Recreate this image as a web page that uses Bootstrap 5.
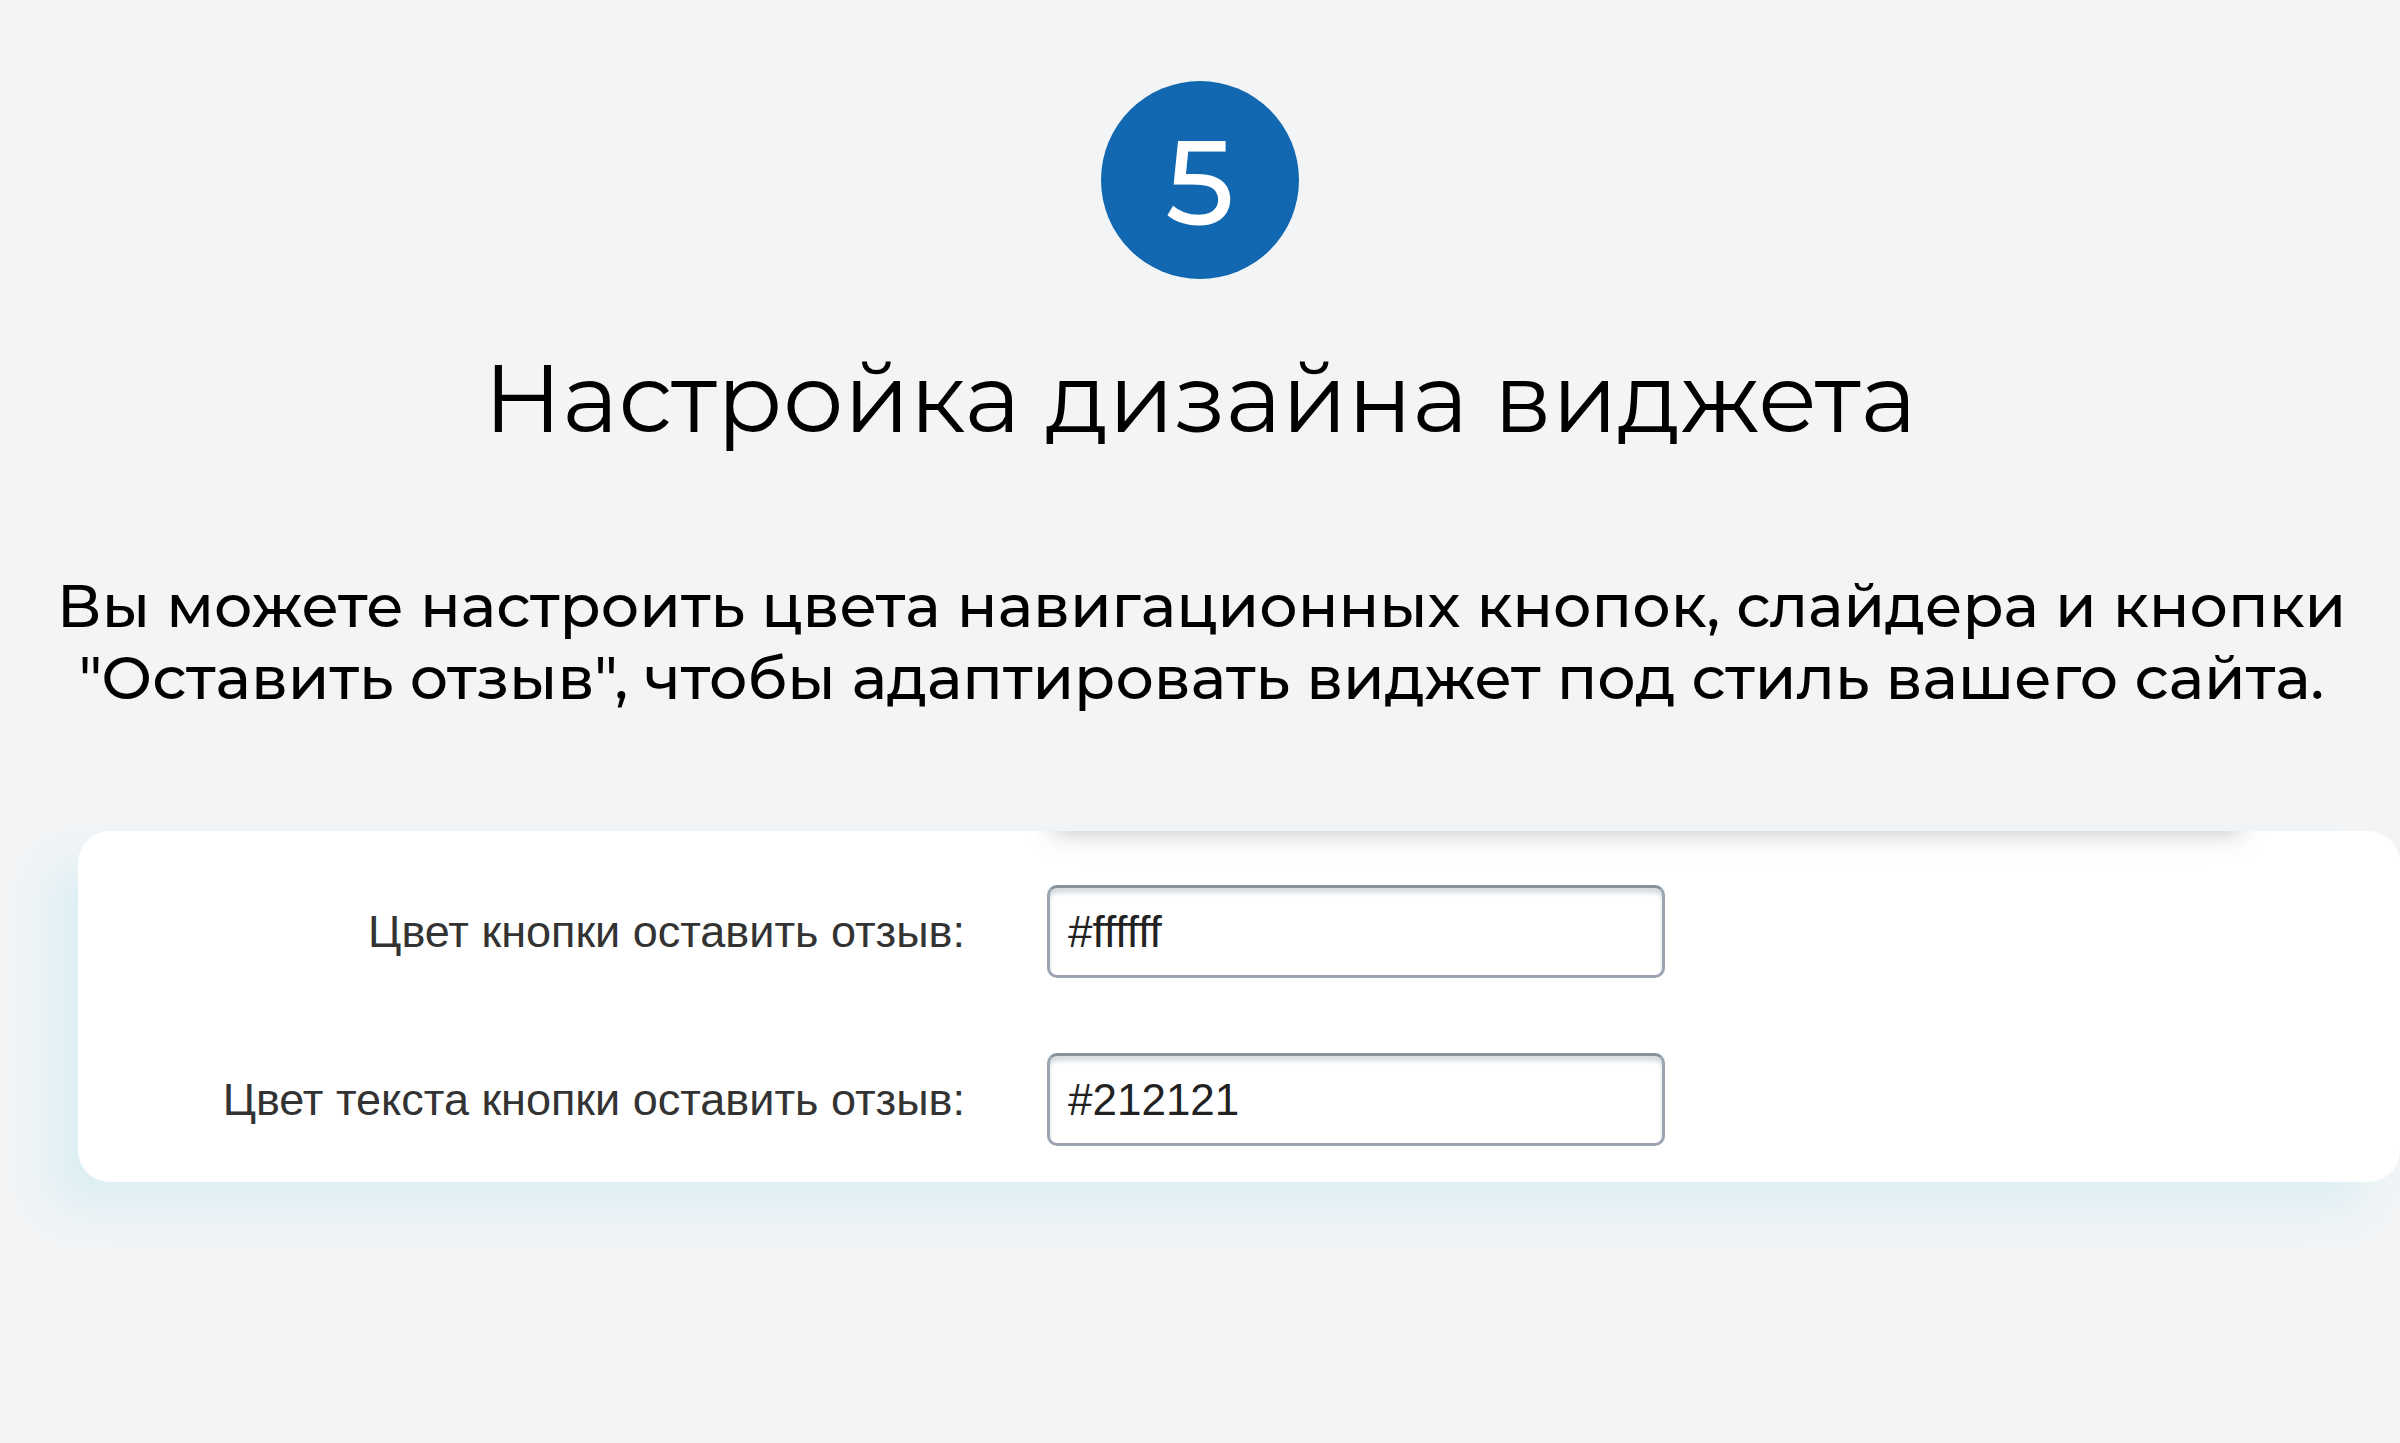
<!DOCTYPE html>
<html lang="ru">
<head>
<meta charset="utf-8">
<meta name="viewport" content="width=device-width, initial-scale=1">
<title>Настройка дизайна виджета</title>
<link href="https://cdn.jsdelivr.net/npm/bootstrap@5.3.0/dist/css/bootstrap.min.css" rel="stylesheet">
<style>
body { background: #f2f4f6; color: #000; font-family: Montserrat, Inter, "Open Sans", sans-serif; }
.step-section { padding: 81px 0 80px; }
.step-number { width: 198px; height: 198px; padding-top: 4px; background: #1267b1; font-size: 120px; font-weight: 500; line-height: 1; }
.step-title { margin-top: 59px; font-size: 96px; font-weight: 400; line-height: 120px; }
.step-text { margin-top: 112px; padding-left: 3px; font-size: 60px; font-weight: 500; line-height: 72px; }
.settings-panel { margin: 117px 0 0 78px; padding: 54px 0 36px; gap: 75px; border-radius: 32px; box-shadow: -32px 30px 44px -4px #dceff4; font-family: "Liberation Sans", Arial, sans-serif; font-size: 45px; }
.panel-shade { left: 974px; right: 158px; top: -20px; height: 20px; box-shadow: 0 0 20px rgba(0,0,0,.18), 0 4px 34px rgba(0,0,0,.1); }
.settings-row { gap: 82px; }
.settings-label { width: 887px; color: #333; line-height: 48px; }
.settings-input { width: 618px; height: 93px; padding: 0 18px; font-size: 44px; color: #222; border: 3px solid #9aa5b1; border-top-color: #85929e; border-radius: 10px; box-shadow: inset 0 5px 4px #d9dddf; }
</style>
</head>
<body>
<main class="step-section text-center min-vh-100">
  <div class="step-number rounded-circle text-white d-flex align-items-center justify-content-center mx-auto">5</div>
  <h1 class="step-title mb-0">Настройка дизайна виджета</h1>
  <p class="step-text mb-0">Вы можете настроить цвета навигационных кнопок, слайдера и кнопки<br>"Оставить отзыв", чтобы адаптировать виджет под стиль вашего сайта.</p>
  <form class="settings-panel bg-white d-flex flex-column text-start position-relative overflow-hidden">
    <div class="panel-shade position-absolute" aria-hidden="true"></div>
    <div class="settings-row d-flex align-items-center">
      <label class="settings-label text-end" for="buttonColor">Цвет кнопки оставить отзыв:</label>
      <input class="settings-input form-control" id="buttonColor" type="text" value="#ffffff">
    </div>
    <div class="settings-row d-flex align-items-center">
      <label class="settings-label text-end" for="textColor">Цвет текста кнопки оставить отзыв:</label>
      <input class="settings-input form-control" id="textColor" type="text" value="#212121">
    </div>
  </form>
</main>
<script src="https://cdn.jsdelivr.net/npm/bootstrap@5.3.0/dist/js/bootstrap.bundle.min.js"></script>
</body>
</html>
